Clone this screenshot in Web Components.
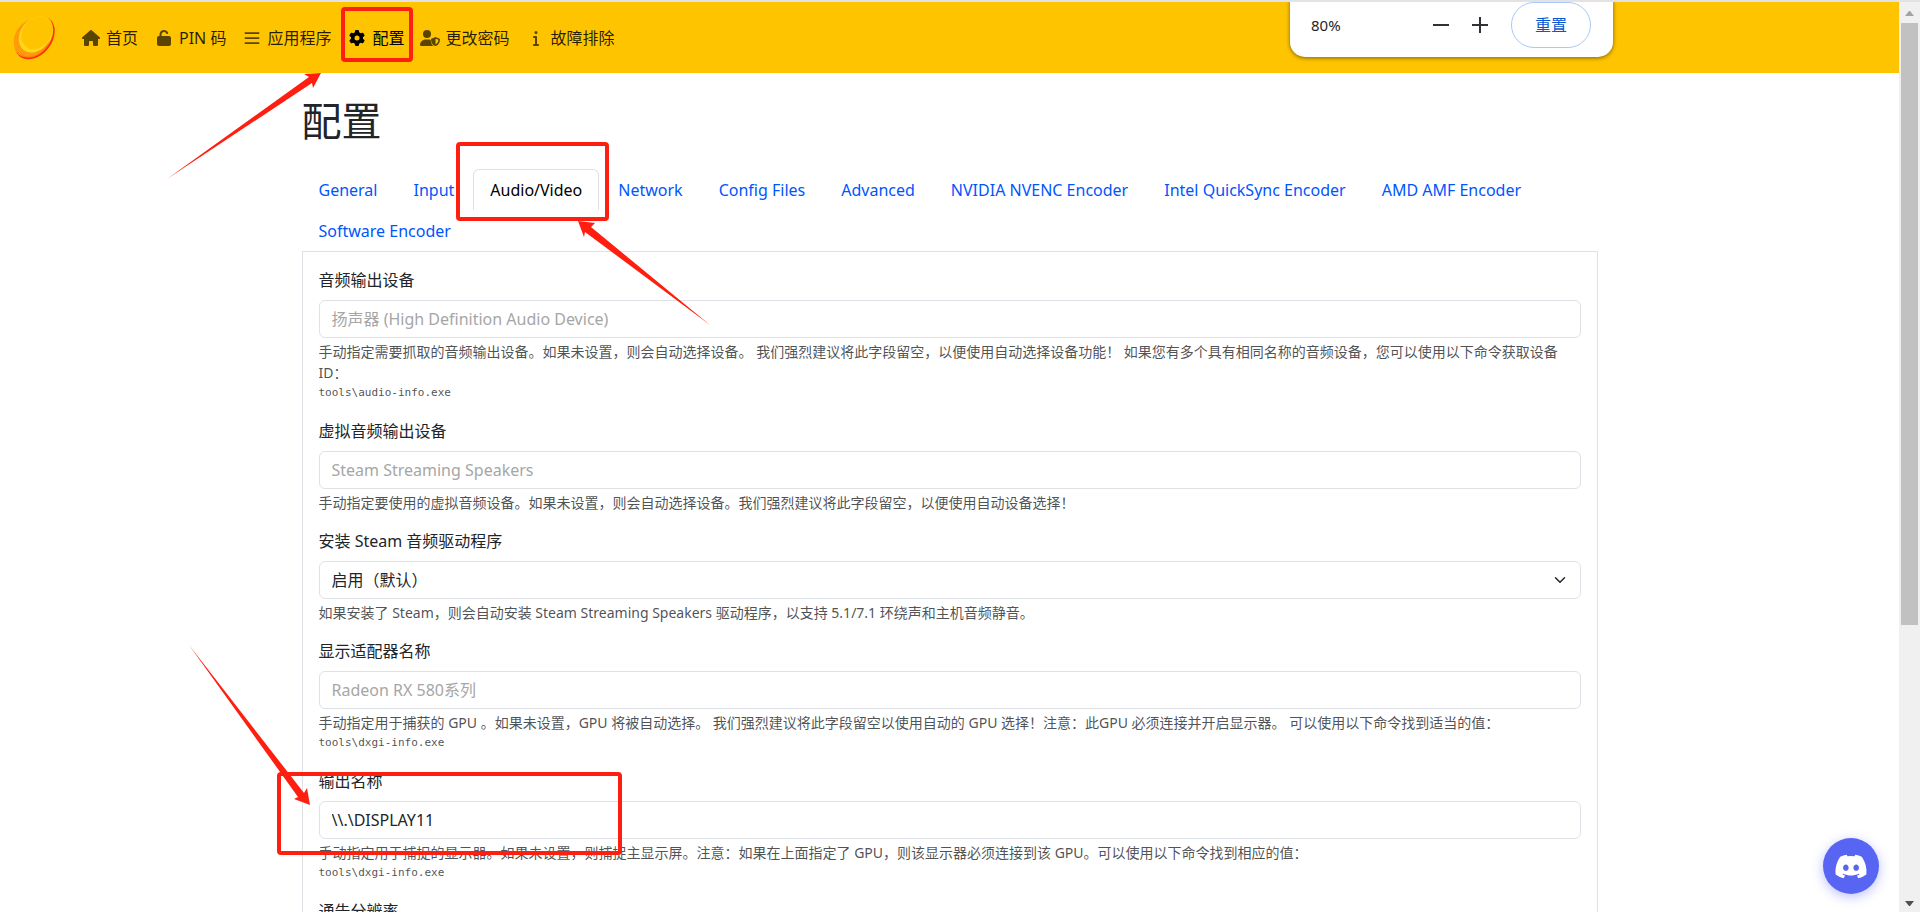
<!DOCTYPE html>
<html lang="zh-CN">
<head>
<meta charset="utf-8">
<title>Sunshine - 配置</title>
<style>
  body {
    margin: 0;
    background: white;
    color: #212529;
    font: 16px/24px "Noto Sans", "Noto Sans CJK SC", sans-serif;
  }
</style>
</head>
<body>
<app-shell>
  <top-nav slot="header">
    <nav-link icon="house">首页</nav-link>
    <nav-link icon="unlock">PIN 码</nav-link>
    <nav-link icon="bars">应用程序</nav-link>
    <nav-link icon="gear" active>配置</nav-link>
    <nav-link icon="shield">更改密码</nav-link>
    <nav-link icon="info">故障排除</nav-link>
  </top-nav>

  <config-page heading="配置">
    <tab-bar slot="tabs" active="Audio/Video"
      tabs="General|Input|Audio/Video|Network|Config Files|Advanced|NVIDIA NVENC Encoder|Intel QuickSync Encoder|AMD AMF Encoder|Software Encoder"></tab-bar>
    <config-field label="音频输出设备" placeholder="扬声器 (High Definition Audio Device)" command="tools\audio-info.exe">手动指定需要抓取的音频输出设备。如果未设置，则会自动选择设备。 我们强烈建议将此字段留空，以便使用自动选择设备功能！ 如果您有多个具有相同名称的音频设备，您可以使用以下命令获取设备 ID：</config-field>
    <config-field label="虚拟音频输出设备" placeholder="Steam Streaming Speakers">手动指定要使用的虚拟音频设备。如果未设置，则会自动选择设备。我们强烈建议将此字段留空，以便使用自动设备选择！</config-field>
    <config-field label="安装 Steam 音频驱动程序" options="启用（默认）">如果安装了 Steam，则会自动安装 Steam Streaming Speakers 驱动程序，以支持 5.1/7.1 环绕声和主机音频静音。</config-field>
    <config-field label="显示适配器名称" placeholder="Radeon RX 580系列" command="tools\dxgi-info.exe">手动指定用于捕获的 GPU 。如果未设置，GPU 将被自动选择。 我们强烈建议将此字段留空以使用自动的 GPU 选择！注意：此GPU 必须连接并开启显示器。 可以使用以下命令找到适当的值：</config-field>
    <config-field label="输出名称" value="\\.\DISPLAY11" command="tools\dxgi-info.exe">手动指定用于捕捉的显示器。如果未设置，则捕捉主显示屏。注意：如果在上面指定了 GPU，则该显示器必须连接到该 GPU。可以使用以下命令找到相应的值：</config-field>
    <config-field label="通告分辨率"></config-field>
  </config-page>

  <zoom-bubble slot="overlay"></zoom-bubble>
  <discord-button slot="overlay"></discord-button>
  <marker-layer slot="overlay"></marker-layer>
  <scroll-track slot="scroll"></scroll-track>
</app-shell>

<script>
const ICONS = {
  house: ['576 512', '<path d="M575.8 255.5c0 18-15 32.1-32 32.1h-32l.7 160.2c0 2.7-.2 5.4-.5 8.1V472c0 22.1-17.9 40-40 40H392c-22.1 0-40-17.9-40-40V384c0-17.7-14.3-32-32-32H256c-17.7 0-32 14.3-32 32v88c0 22.1-17.9 40-40 40H104c-22.1 0-40-17.9-40-40V287.6H32c-18 0-32-14-32-32.1c0-9 3-17 10-24L266.4 8c7-7 15-8 22-8s15 2 21 7L564.8 231.5c8 7 12 15 11 24z"/>'],
  unlock: ['448 512', '<path d="M144 144c0-44.2 35.8-80 80-80c31.9 0 59.4 18.6 72.3 45.7c7.6 16 26.7 22.8 42.6 15.2s22.8-26.7 15.2-42.6C331 33.7 281.5 0 224 0C144.5 0 80 64.5 80 144v48H64c-35.3 0-64 28.7-64 64V448c0 35.3 28.7 64 64 64H384c35.3 0 64-28.7 64-64V256c0-35.3-28.7-64-64-64H144V144z"/>'],
  bars: ['512 512', '<path d="M24 68h464v56H24zM24 228h464v56H24zM24 388h464v56H24z"/>'],
  gear: ['512 512', '<path d="M495.9 166.6c3.2 8.7 .5 18.4-6.4 24.6l-43.3 39.4c1.1 8.3 1.7 16.8 1.7 25.4s-.6 17.1-1.7 25.4l43.3 39.4c6.9 6.2 9.6 15.9 6.4 24.6c-4.4 11.9-9.7 23.3-15.8 34.3l-4.7 8.1c-6.6 11-14 21.4-22.1 31.2c-5.9 7.2-15.7 9.6-24.5 6.8l-55.7-17.7c-13.4 10.3-28.2 18.9-44 25.4l-12.5 57.1c-2 9.1-9 16.3-18.2 17.8c-13.8 2.3-28 3.5-42.5 3.5s-28.7-1.2-42.5-3.5c-9.2-1.5-16.2-8.7-18.2-17.8l-12.5-57.1c-15.8-6.5-30.6-15.1-44-25.4L83.1 425.9c-8.8 2.8-18.6 .3-24.5-6.8c-8.1-9.8-15.5-20.2-22.1-31.2l-4.7-8.1c-6.1-11-11.4-22.4-15.8-34.3c-3.2-8.7-.5-18.4 6.4-24.6l43.3-39.4C64.6 273.1 64 264.6 64 256s.6-17.1 1.7-25.4L22.4 191.2c-6.9-6.2-9.6-15.9-6.4-24.6c4.4-11.9 9.7-23.3 15.8-34.3l4.7-8.1c6.6-11 14-21.4 22.1-31.2c5.9-7.2 15.7-9.6 24.5-6.8l55.7 17.7c13.4-10.3 28.2-18.9 44-25.4l12.5-57.1c2-9.1 9-16.3 18.2-17.8C227.3 1.2 241.5 0 256 0s28.7 1.2 42.5 3.5c9.2 1.5 16.2 8.7 18.2 17.8l12.5 57.1c15.8 6.5 30.6 15.1 44 25.4l55.7-17.7c8.8-2.8 18.6-.3 24.5 6.8c8.1 9.8 15.5 20.2 22.1 31.2l4.7 8.1c6.1 11 11.4 22.4 15.8 34.3zM256 336a80 80 0 1 0 0-160 80 80 0 1 0 0 160z"/>'],
  shield: ['640 512', '<circle cx="224" cy="128" r="128"/><path d="M178 304h92c25 0 49 5 72 14c2 77 32 140 80 188c-6 4-12 6-20 6H30c-17 0-30-13-30-30c0-98 80-178 178-178z"/><path fill-rule="evenodd" d="M496 226l132 50c8 3 12 10 12 18c0 88-34 182-138 216c-4 2-8 2-12 0c-104-34-138-128-138-216c0-8 4-15 12-18zM496 278v184c60-26 90-78 94-148z"/>'],
  info: ['192 512', '<path d="M48 80a48 48 0 1 1 96 0A48 48 0 1 1 48 80zM0 224c0-17.700 14.300-32 32-32H96c17.700 0 32 14.300 32 32V448h32c17.700 0 32 14.300 32 32s-14.300 32-32 32H32c-17.700 0-32-14.300-32-32s14.300-32 32-32H64V256H32c-17.700 0-32-14.300-32-32z"/>']
};

class AppShell extends HTMLElement {
  connectedCallback() {
    this.attachShadow({ mode: 'open' });
    this.shadowRoot.innerHTML = `
      <style>
        :host {
          display: flex;
          position: relative;
          height: 100vh;
          overflow: hidden;
          box-sizing: border-box;
          border-top: 2px solid #e3e3e6;
        }
        .page {
          flex: 1;
          min-width: 0;
          overflow: hidden;
        }
      </style>
      <div class="page">
        <slot name="header"></slot>
        <slot></slot>
      </div>
      <slot name="scroll"></slot>
      <slot name="overlay"></slot>
    `;
  }
}
customElements.define('app-shell', AppShell);

class TopNav extends HTMLElement {
  connectedCallback() {
    this.attachShadow({ mode: 'open' });
    this.shadowRoot.innerHTML = `
      <style>
        :host {
          display: block;
          background: #ffc400;
        }
        nav {
          display: flex;
          align-items: center;
          gap: 24px;
          padding: 13px 12px;
        }
        .brand, .brand svg {
          display: block;
          width: 45px;
          height: 45px;
        }
        .links {
          display: flex;
          gap: 16px;
        }
      </style>
      <nav>
        <a class="brand" href="#" aria-label="Sunshine">
          <svg viewBox="0 0 45 45">
            <g transform="rotate(38 22.500 22.500)">
              <ellipse cx="22.500" cy="22.500" rx="17.500" ry="24" fill="#ff2a12"/>
              <ellipse cx="20.500" cy="22" rx="17.500" ry="23.500" fill="#ffc400"/>
              <ellipse cx="21.500" cy="25" rx="16.500" ry="20" fill="#ff7a0c"/>
              <ellipse cx="20.500" cy="24.500" rx="16.500" ry="20" fill="#ff9a08"/>
              <ellipse cx="21.500" cy="19.500" rx="15" ry="19.500" fill="#ffd61c"/>
              <ellipse cx="21.500" cy="17.500" rx="14" ry="17.500" fill="#ffc400"/>
            </g>
          </svg>
        </a>
        <div class="links"><slot></slot></div>
      </nav>
    `;
  }
}
customElements.define('top-nav', TopNav);

class NavLink extends HTMLElement {
  connectedCallback() {
    const [box, shape] = ICONS[this.getAttribute('icon')];
    this.attachShadow({ mode: 'open' });
    this.shadowRoot.innerHTML = `
      <style>
        :host {
          display: block;
          color: rgba(0, 0, 0, .65);
        }
        :host([active]) {
          color: black;
        }
        a {
          display: flex;
          align-items: center;
          gap: 5px;
          color: inherit;
          text-decoration: none;
          white-space: nowrap;
        }
        svg {
          width: 20px;
          height: 16px;
          fill: currentColor;
        }
        span {
          color: rgba(0, 0, 0, .85);
        }
        :host([active]) span {
          color: black;
        }
      </style>
      <a href="#"><svg viewBox="0 0 ${box}" aria-hidden="true">${shape}</svg><span><slot></slot></span></a>
    `;
  }
}
customElements.define('nav-link', NavLink);

class ConfigPage extends HTMLElement {
  connectedCallback() {
    this.attachShadow({ mode: 'open' });
    this.shadowRoot.innerHTML = `
      <style>
        :host {
          display: block;
          max-width: 1296px;
          margin: 0 auto;
          padding: 0 12px;
        }
        h1 {
          margin: 24px 0;
          font-size: 40px;
          line-height: 48px;
          font-weight: 400;
        }
        form {
          display: flex;
          flex-direction: column;
          gap: 16px;
          padding: 16px;
          border: 1px solid #dee2e6;
          border-top: 0;
        }
      </style>
      <h1>${this.getAttribute('heading')}</h1>
      <slot name="tabs"></slot>
      <form><slot></slot></form>
    `;
  }
}
customElements.define('config-page', ConfigPage);

class TabBar extends HTMLElement {
  connectedCallback() {
    const active = this.getAttribute('active');
    const links = this.getAttribute('tabs').split('|').map(name =>
      `<a href="#"${name === active ? ' class="active" aria-current="page"' : ''}>${name}</a>`
    ).join('');
    this.attachShadow({ mode: 'open' });
    this.shadowRoot.innerHTML = `
      <style>
        :host {
          display: block;
        }
        nav {
          display: flex;
          flex-wrap: wrap;
          column-gap: 2px;
          border-bottom: 1px solid #dee2e6;
        }
        a {
          padding: 8px 16px;
          border: 1px solid transparent;
          border-bottom: 0;
          border-radius: 6px 6px 0 0;
          color: #0055ff;
          text-decoration: none;
        }
        .active {
          border-color: #dee2e6;
          color: black;
        }
      </style>
      <nav>${links}</nav>
    `;
  }
}
customElements.define('tab-bar', TabBar);

class ConfigField extends HTMLElement {
  control() {
    if (this.hasAttribute('options')) {
      const options = this.getAttribute('options').split('|').map(o => `<option>${o}</option>`).join('');
      return `
        <div class="select">
          <select id="control">${options}</select>
          <svg viewBox="0 0 16 16" aria-hidden="true"><path d="m2 5 6 6 6-6"/></svg>
        </div>`;
    }
    return `<input type="text" id="control" placeholder="${this.getAttribute('placeholder') || ''}" value="${this.getAttribute('value') || ''}">`;
  }

  connectedCallback() {
    const command = this.getAttribute('command');
    this.attachShadow({ mode: 'open' });
    this.shadowRoot.innerHTML = `
      <style>
        :host {
          display: block;
        }
        label {
          display: block;
          margin-bottom: 8px;
        }
        input, select {
          display: block;
          box-sizing: border-box;
          width: 100%;
          height: 38px;
          margin: 0;
          padding: 6px 12px;
          border: 1px solid #dee2e6;
          border-radius: 6px;
          background: white;
          color: #212529;
          font: inherit;
          appearance: none;
        }
        input::placeholder {
          color: #a6a6a6;
          opacity: 1;
        }
        .select {
          position: relative;
        }
        .select svg {
          position: absolute;
          right: 13px;
          top: 13px;
          width: 16px;
          height: 12px;
          fill: none;
          stroke: #212529;
          stroke-width: 2;
          stroke-linecap: round;
          stroke-linejoin: round;
          pointer-events: none;
        }
        .help {
          margin-top: 3px;
          color: rgba(33, 37, 41, .8);
          font-size: 14px;
          line-height: 21px;
        }
        pre {
          margin: 0;
          font: 11px/20px "DejaVu Sans Mono", monospace;
        }
      </style>
      <label for="control">${this.getAttribute('label')}</label>
      ${this.control()}
      <div class="help">
        <slot></slot>
        ${command ? `<pre>${command}</pre>` : ''}
      </div>
    `;
  }
}
customElements.define('config-field', ConfigField);

class ZoomBubble extends HTMLElement {
  connectedCallback() {
    this.attachShadow({ mode: 'open' });
    this.shadowRoot.innerHTML = `
      <style>
        :host {
          position: absolute;
          top: -2px;
          right: 307px;
          display: flex;
          align-items: center;
          box-sizing: border-box;
          width: 323px;
          padding: 2px 22px 9px 21px;
          border-radius: 0 0 15px 15px;
          background: white;
          box-shadow: 0 1px 4px rgba(0, 0, 0, .5);
          color: #1f1f1f;
        }
        span {
          flex: 1;
          font-size: 15px;
        }
        button {
          padding: 0;
          border: 0;
          background: none;
          color: #0b57d0;
          font: inherit;
        }
        .step {
          width: 16px;
          height: 16px;
          margin-right: 23px;
        }
        .step svg {
          display: block;
          stroke: #303134;
          stroke-width: 2;
        }
        .reset {
          width: 80px;
          height: 46px;
          border: 1px solid #a8c7fa;
          border-radius: 23px;
        }
      </style>
      <span>80%</span>
      <button class="step" aria-label="缩小"><svg width="16" height="16"><path d="M0 8h16"/></svg></button>
      <button class="step" aria-label="放大"><svg width="16" height="16"><path d="M0 8h16M8 0v16"/></svg></button>
      <button class="reset">重置</button>
    `;
  }
}
customElements.define('zoom-bubble', ZoomBubble);

class DiscordButton extends HTMLElement {
  connectedCallback() {
    this.attachShadow({ mode: 'open' });
    this.shadowRoot.innerHTML = `
      <style>
        :host {
          position: absolute;
          right: 41px;
          bottom: 18px;
        }
        button {
          display: flex;
          align-items: center;
          justify-content: center;
          width: 56px;
          height: 56px;
          padding: 0;
          border: 0;
          border-radius: 50%;
          background: #5865f2;
          box-shadow: 0 3px 12px rgba(88, 101, 242, .4);
        }
        svg {
          width: 34px;
          height: 27px;
          fill: white;
        }
      </style>
      <button aria-label="Discord">
        <svg viewBox="0 0 640 512"><path d="M524.531,69.836a1.5,1.5,0,0,0-.764-.7A485.065,485.065,0,0,0,404.081,32.03a1.816,1.816,0,0,0-1.923.91,337.461,337.461,0,0,0-14.9,30.6,447.848,447.848,0,0,0-134.426,0,309.541,309.541,0,0,0-15.135-30.6,1.89,1.89,0,0,0-1.924-.91A483.689,483.689,0,0,0,116.085,69.137a1.712,1.712,0,0,0-.788.676C39.068,183.651,18.186,294.69,28.43,404.354a2.016,2.016,0,0,0,.765,1.375A487.666,487.666,0,0,0,176.02,479.918a1.9,1.9,0,0,0,2.063-.676A348.2,348.2,0,0,0,208.12,430.4a1.86,1.86,0,0,0-1.019-2.588,321.173,321.173,0,0,1-45.868-21.853,1.885,1.885,0,0,1-.185-3.126c3.082-2.309,6.166-4.711,9.109-7.137a1.819,1.819,0,0,1,1.9-.256c96.229,43.917,200.41,43.917,295.5,0a1.812,1.812,0,0,1,1.924.233c2.944,2.426,6.027,4.851,9.132,7.16a1.884,1.884,0,0,1-.162,3.126,301.407,301.407,0,0,1-45.89,21.83,1.875,1.875,0,0,0-1,2.611,391.055,391.055,0,0,0,30.014,48.815,1.864,1.864,0,0,0,2.063.7A486.048,486.048,0,0,0,610.7,405.729a1.882,1.882,0,0,0,.765-1.352C623.729,277.594,590.933,167.465,524.531,69.836ZM222.491,337.58c-28.972,0-52.844-26.587-52.844-59.239S193.056,219.1,222.491,219.1c29.665,0,53.306,26.82,52.843,59.239C275.334,310.993,251.924,337.58,222.491,337.58Zm195.38,0c-28.971,0-52.843-26.587-52.843-59.239S388.437,219.1,417.871,219.1c29.667,0,53.307,26.82,52.844,59.239C470.715,310.993,447.538,337.58,417.871,337.58Z"/></svg>
      </button>
    `;
  }
}
customElements.define('discord-button', DiscordButton);

// red boxes and arrows drawn over the page
class MarkerLayer extends HTMLElement {
  connectedCallback() {
    this.attachShadow({ mode: 'open' });
    this.shadowRoot.innerHTML = `
      <style>
        :host {
          position: absolute;
          top: -2px;
          left: 0;
          pointer-events: none;
        }
        svg {
          display: block;
          fill: #ff1f11;
        }
        rect {
          fill: none;
          stroke: #ff1f11;
          stroke-width: 4;
        }
      </style>
      <svg width="720" height="912" aria-hidden="true">
        <rect x="343" y="9" width="68" height="51" rx="2"/>
        <rect x="458" y="144" width="149" height="75" rx="2"/>
        <rect x="279" y="774" width="341" height="79" rx="2"/>
        <path d="M321 73 304 74 309 77 167 179 312 83 313 88z"/>
        <path d="M578 221 595 223 591 227 710 325 585 232 584 237z"/>
        <path d="M310 805 307 788 304 793 189 645 298 797 294 799z"/>
      </svg>
    `;
  }
}
customElements.define('marker-layer', MarkerLayer);

class ScrollTrack extends HTMLElement {
  connectedCallback() {
    this.attachShadow({ mode: 'open' });
    this.shadowRoot.innerHTML = `
      <style>
        :host {
          display: flex;
          flex-direction: column;
          align-items: center;
          width: 21px;
          background: #f0f0f0;
        }
        svg {
          flex: none;
          width: 21px;
          height: 21px;
        }
        .track {
          flex: 1;
          width: 17px;
        }
        .thumb {
          height: 69.400%;
          background: #c1c1c1;
        }
      </style>
      <svg viewBox="0 0 21 21"><path d="M6 14h9l-4-5h-1z" fill="#a3a3a3"/></svg>
      <div class="track"><div class="thumb"></div></div>
      <svg viewBox="0 0 21 21"><path d="M6 10h9l-4 5h-1z" fill="#505050"/></svg>
    `;
  }
}
customElements.define('scroll-track', ScrollTrack);
</script>
</body>
</html>
